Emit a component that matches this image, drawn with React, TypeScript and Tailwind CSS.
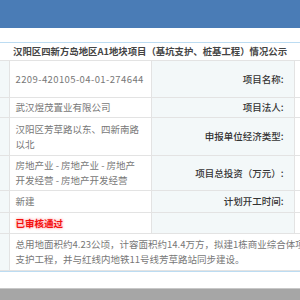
import React from 'react';

const font = { fontFamily: '"Noto Sans CJK SC", "Liberation Sans", sans-serif' };

interface Row {
  value: React.ReactNode;
  label: string;
  h: string;
}

const rows: Row[] = [
  { value: <span className="tracking-[0.4px]">2209-420105-04-01-274644</span>, label: '项目名称:', h: 'h-[37px]' },
  { value: '武汉煜茂置业有限公司', label: '项目法人:', h: 'h-[20px]' },
  { value: '汉阳区芳草路以东、四新南路以北', label: '申报单位经济类型:', h: 'h-[38px]' },
  { value: '房地产业 - 房地产业 - 房地产开发经营 - 房地产开发经营', label: '项目总投资（万元）:', h: 'h-[35px]' },
  { value: '新建', label: '计划开工时间:', h: 'h-[22px]' },
  {
    value: <span className="font-bold text-[#f41010] [text-shadow:0_0_3px_#ff8080]">已审核通过</span>,
    label: '',
    h: 'h-[21px]',
  },
];

export default function App() {
  return (
    <div className="w-[300px] h-[300px] overflow-hidden bg-white flex flex-col" style={font}>
      {/* top bar */}
      <div className="h-[28px] bg-[#4a7cb6] shrink-0"></div>
      <div className="h-[14px] shrink-0"></div>
      <div className="h-px bg-[#bcdcf2] shrink-0"></div>

      {/* title */}
      <div className="h-[17px] shrink-0 flex items-center pl-[13px] whitespace-nowrap text-[9.4px] font-bold text-[#444] leading-none">
        汉阳区四新方岛地区A1地块项目（基坑支护、桩基工程）情况公示
      </div>

      {/* table */}
      <div className="overflow-hidden shrink-0">
        <table className="table-fixed border-collapse w-[420px] text-[9.5px] leading-[15px]">
          <colgroup>
            <col className="w-[9px]" />
            <col className="w-[142px]" />
            <col className="w-[143px]" />
            <col className="w-[126px]" />
          </colgroup>
          <tbody>
            {rows.map((r, i) => (
              <tr key={i} className={r.h}>
                <td className="bg-[#f3f8f9] border border-[#e3e3e3] border-l-0 p-0"></td>
                <td className="border border-[#e3e3e3] px-[6px] py-0 text-[#777] align-middle">{r.value}</td>
                <td className="bg-[#f3f8f9] border border-[#e3e3e3] pr-[10px] text-right text-[#333] font-medium align-middle">{r.label}</td>
                <td className="border border-[#e3e3e3] border-r-0 p-0"></td>
              </tr>
            ))}
            <tr className="h-[37px]">
              <td className="bg-[#f3f8f9] border border-[#e3e3e3] border-l-0 p-0"></td>
              <td colSpan={3} className="border border-[#e3e3e3] border-r-0 px-[6px] py-0 text-[#777] whitespace-nowrap align-middle">
                <div>总用地面积约4.23公顷，计容面积约14.4万方，拟建1栋商业综合体项目，</div>
                <div>支护工程，并与红线内地铁11号线芳草路站同步建设。</div>
              </td>
            </tr>
          </tbody>
        </table>
      </div>

      <div className="h-px bg-[#bcdcf2] shrink-0"></div>
      <div className="h-[16px] shrink-0"></div>
      <div className="flex-1 bg-[#a6a6a6] border-t border-[#c8c8c8]"></div>
    </div>
  );
}
